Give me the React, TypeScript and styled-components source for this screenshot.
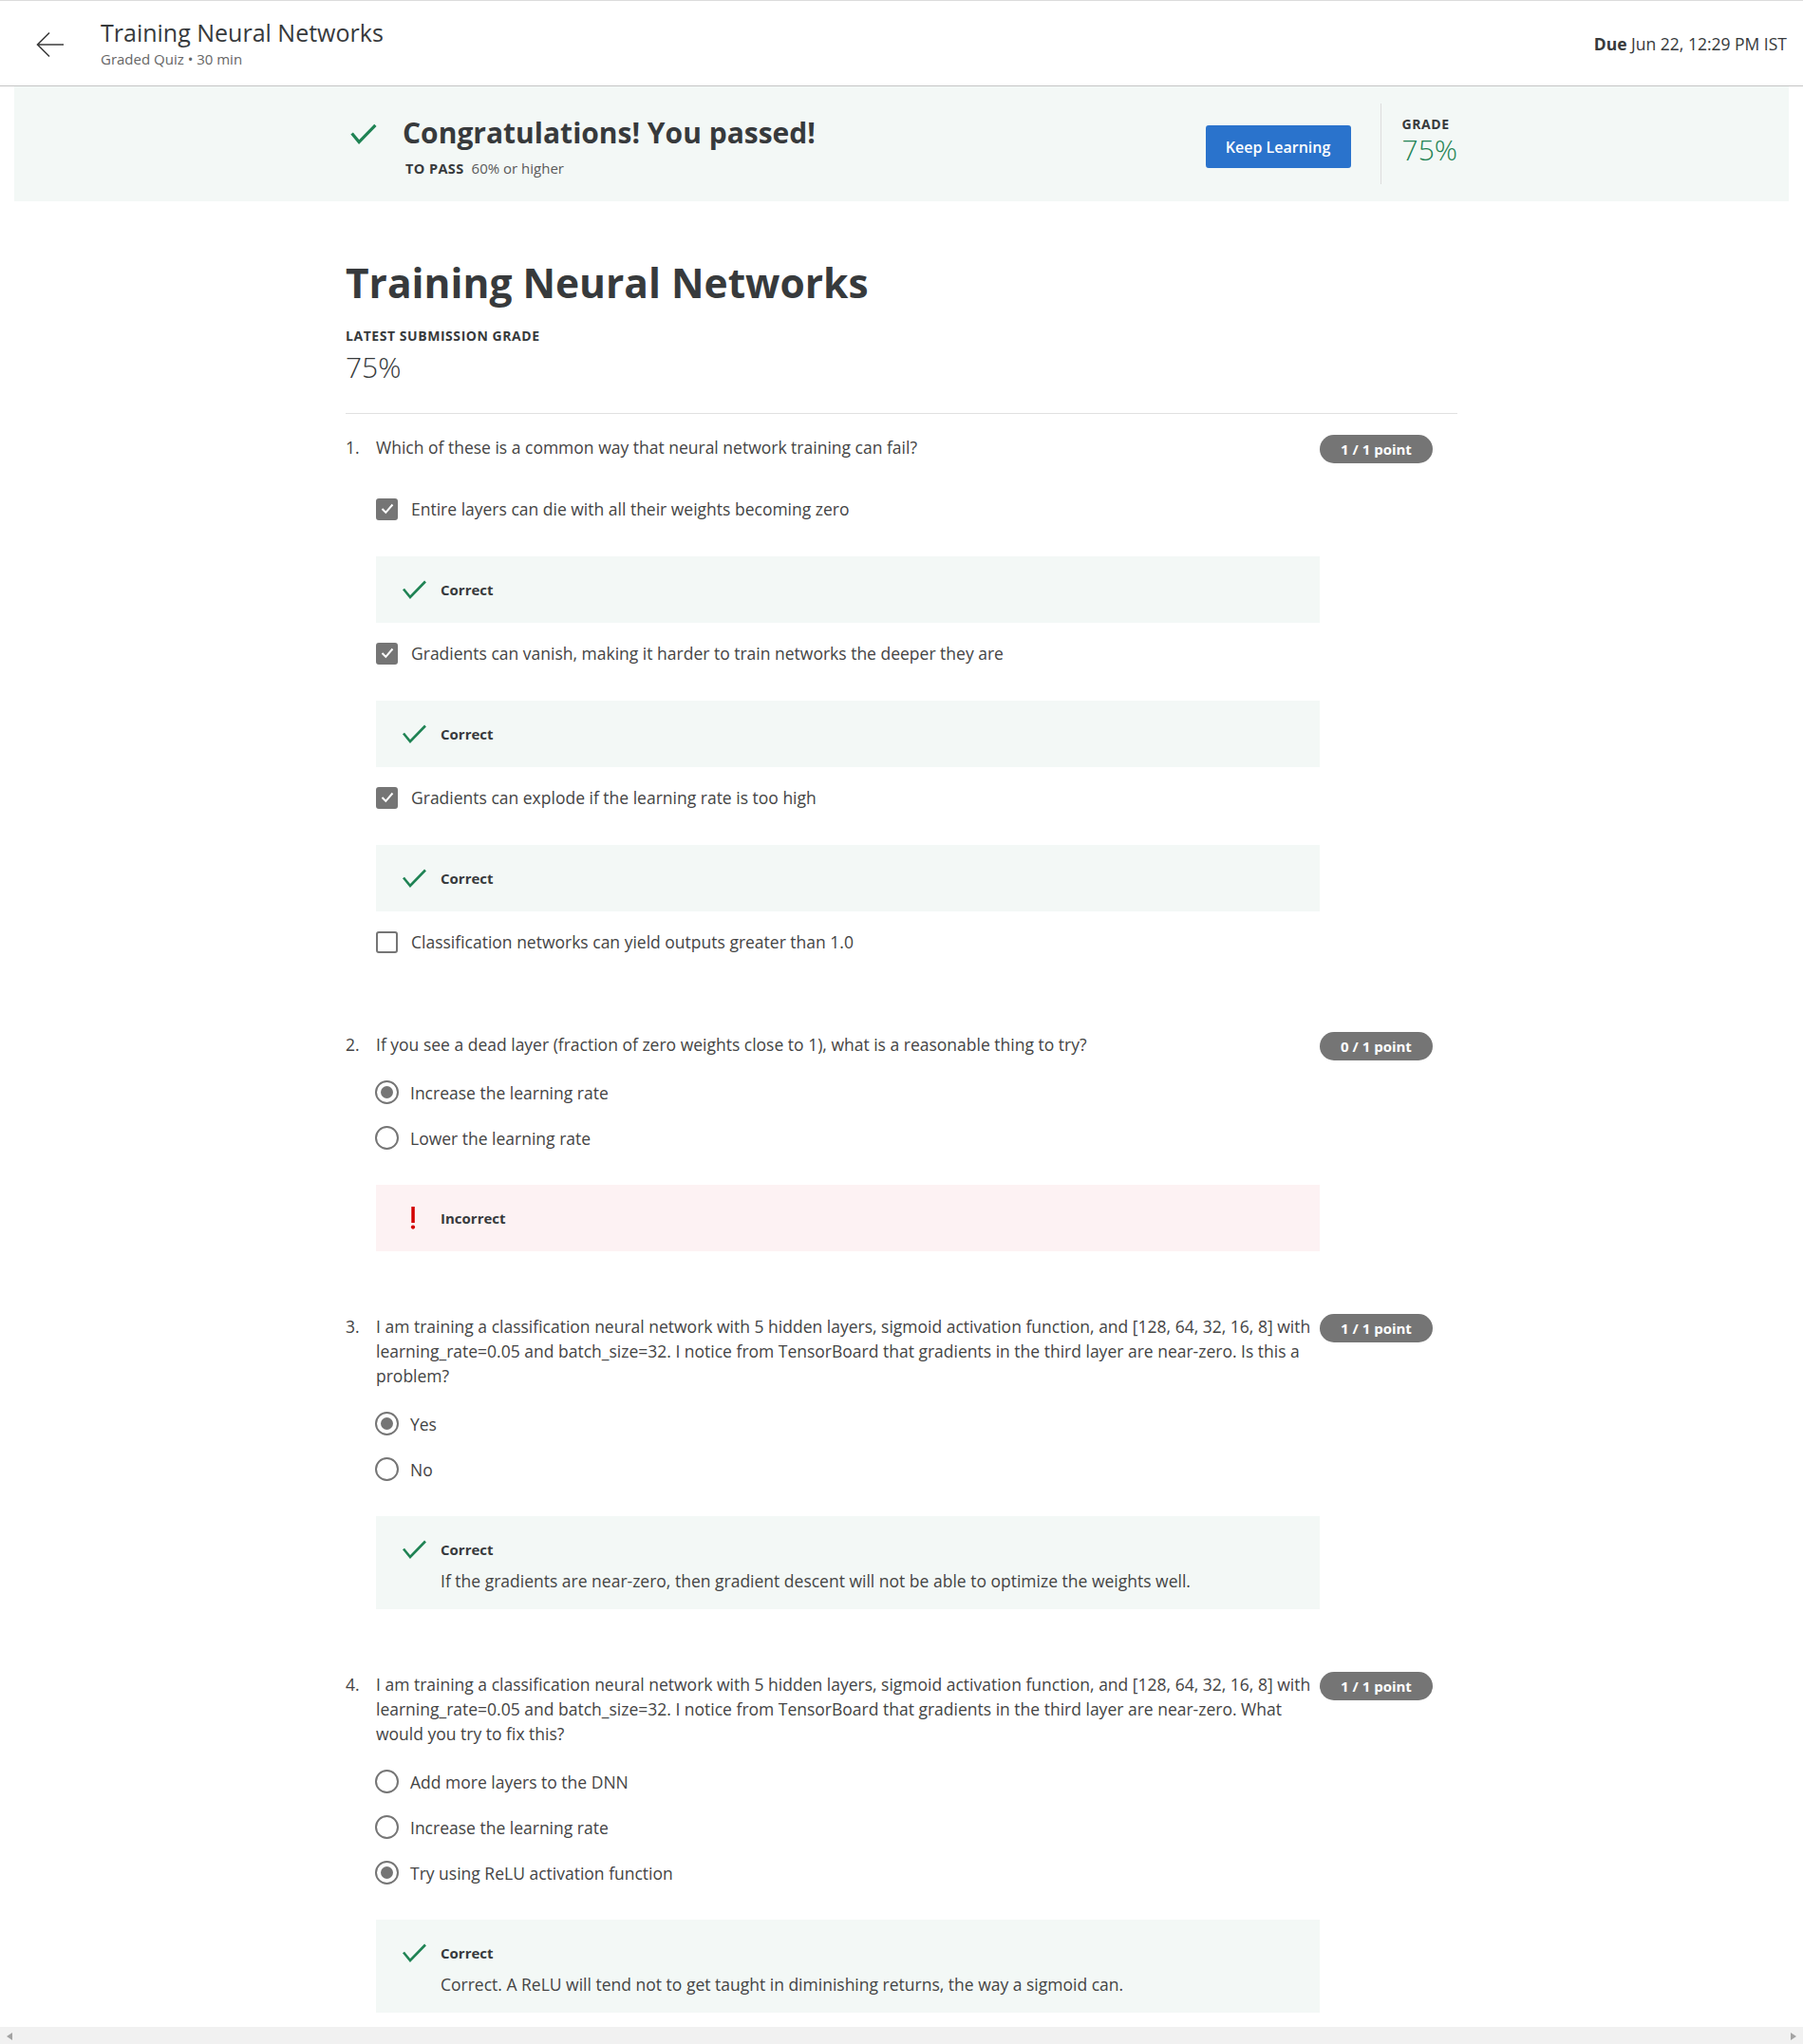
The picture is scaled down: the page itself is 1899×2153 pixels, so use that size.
import React from 'react';
import styled, { createGlobalStyle } from 'styled-components';

const GlobalStyle = createGlobalStyle`
  html, body {
    margin: 0;
    padding: 0;
    background: #ffffff;
  }
  body {
    font-family: "Open Sans", "Noto Sans", Arial, sans-serif;
    color: #373a3c;
  }
  * {
    box-sizing: border-box;
  }
`;

type Option = { text: string; selected: boolean };
type Feedback = { status: 'correct' | 'incorrect'; explanation?: string };
type Question = {
  num: number;
  text: string;
  points: string;
  kind: 'checkbox' | 'radio';
  options: (Option & { feedback?: Feedback })[];
  feedback?: Feedback;
};

const questions: Question[] = [
  {
    num: 1,
    text: 'Which of these is a common way that neural network training can fail?',
    points: '1 / 1 point',
    kind: 'checkbox',
    options: [
      { text: 'Entire layers can die with all their weights becoming zero', selected: true, feedback: { status: 'correct' } },
      { text: 'Gradients can vanish, making it harder to train networks the deeper they are', selected: true, feedback: { status: 'correct' } },
      { text: 'Gradients can explode if the learning rate is too high', selected: true, feedback: { status: 'correct' } },
      { text: 'Classification networks can yield outputs greater than 1.0', selected: false },
    ],
  },
  {
    num: 2,
    text: 'If you see a dead layer (fraction of zero weights close to 1), what is a reasonable thing to try?',
    points: '0 / 1 point',
    kind: 'radio',
    options: [
      { text: 'Increase the learning rate', selected: true },
      { text: 'Lower the learning rate', selected: false },
    ],
    feedback: { status: 'incorrect' },
  },
  {
    num: 3,
    text: 'I am training a classification neural network with 5 hidden layers, sigmoid activation function, and [128, 64, 32, 16, 8] with learning_rate=0.05 and batch_size=32. I notice from TensorBoard that gradients in the third layer are near-zero. Is this a problem?',
    points: '1 / 1 point',
    kind: 'radio',
    options: [
      { text: 'Yes', selected: true },
      { text: 'No', selected: false },
    ],
    feedback: {
      status: 'correct',
      explanation: 'If the gradients are near-zero, then gradient descent will not be able to optimize the weights well.',
    },
  },
  {
    num: 4,
    text: 'I am training a classification neural network with 5 hidden layers, sigmoid activation function, and [128, 64, 32, 16, 8] with learning_rate=0.05 and batch_size=32. I notice from TensorBoard that gradients in the third layer are near-zero. What would you try to fix this?',
    points: '1 / 1 point',
    kind: 'radio',
    options: [
      { text: 'Add more layers to the DNN', selected: false },
      { text: 'Increase the learning rate', selected: false },
      { text: 'Try using ReLU activation function', selected: true },
    ],
    feedback: {
      status: 'correct',
      explanation: 'Correct. A ReLU will tend not to get taught in diminishing returns, the way a sigmoid can.',
    },
  },
];

const Screen = styled.div`
  height: 2153px;
  display: flex;
  flex-direction: column;
  overflow: hidden;
`;

const Viewport = styled.div`
  flex: 1;
  overflow: hidden;
`;

const Header = styled.header`
  height: 91px;
  border-top: 1px solid #dcdcdc;
  border-bottom: 1px solid #c4c4c4;
  display: flex;
  align-items: center;
  padding: 0 17px 0 38px;
`;

const BackButton = styled.button`
  border: none;
  background: none;
  padding: 0;
  margin: 2px 38px 0 0;
  display: flex;
  cursor: pointer;
`;

const HeaderTitles = styled.div`
  flex: 1;
  display: flex;
  flex-direction: column;
  margin-top: -1px;
`;

const HeaderTitle = styled.div`
  font-size: 25px;
  line-height: 30px;
  color: #373a3c;
`;

const HeaderSub = styled.div`
  font-size: 15px;
  line-height: 20px;
  margin-top: 3px;
  color: #666666;
`;

const DueText = styled.div`
  font-size: 17.5px;
  line-height: 24px;
  color: #373a3c;
  b {
    font-weight: 700;
  }
`;

const Banner = styled.section`
  margin: 0 15px;
  height: 121px;
  background: #f3f8f6;
  display: flex;
  align-items: center;
`;

const BannerInner = styled.div`
  width: 1171px;
  margin: 0 auto;
  display: flex;
  align-items: center;
`;

const PassBlock = styled.div`
  flex: 1;
  display: grid;
  grid-template-columns: 60px 1fr;
  margin-top: 5px;
`;

const PassIcon = styled.div`
  padding: 8px 0 0 5px;
`;

const PassTitle = styled.h2`
  margin: 0;
  font-size: 30px;
  line-height: 38px;
  font-weight: 700;
  color: #373a3c;
`;

const PassSub = styled.div`
  grid-column: 2;
  margin-top: 8px;
  font-size: 15px;
  line-height: 20px;
  color: #5a5a5a;
  padding-left: 3px;
  b {
    font-size: 14.5px;
    font-weight: 700;
    color: #373a3c;
    letter-spacing: 0.4px;
    margin-right: 8px;
  }
`;

const PrimaryButton = styled.button`
  width: 153px;
  height: 45px;
  border: none;
  border-radius: 3px;
  background: #2a73cc;
  color: #ffffff;
  font-family: inherit;
  font-size: 16px;
  font-weight: 600;
  margin: 6px 31px 0 0;
  cursor: pointer;
`;

const VDivider = styled.div`
  width: 1px;
  height: 85px;
  background: #dddddd;
`;

const GradeBlock = styled.div`
  padding-left: 22px;
  display: flex;
  flex-direction: column;
  margin-top: -8px;
`;

const SmallCaps = styled.div`
  font-size: 14px;
  line-height: 20px;
  font-weight: 700;
  letter-spacing: 0.55px;
  text-transform: uppercase;
  color: #373a3c;
`;

const BigGrade = styled.div<{ $green?: boolean }>`
  font-size: 30px;
  line-height: 34px;
  font-weight: 300;
  color: ${p => (p.$green ? '#1f8354' : '#373a3c')};
`;

const Main = styled.main`
  width: 1171px;
  margin: 0 auto;
  padding-top: 58px;
`;

const PageTitle = styled.h1`
  margin: 0;
  font-size: 42.5px;
  line-height: 56px;
  font-weight: 700;
  color: #373a3c;
`;

const SubmissionBlock = styled.div`
  margin-top: 18px;
  display: flex;
  flex-direction: column;
  gap: 6px;
  padding-bottom: 31px;
  border-bottom: 1px solid #e1e1e1;
`;

const QuestionList = styled.div`
  padding-top: 22px;
  display: flex;
  flex-direction: column;
  gap: 66px;
`;

const QuestionRow = styled.div`
  display: grid;
  grid-template-columns: 32px 994px 1fr;
`;

const QNum = styled.div`
  font-size: 17.5px;
  line-height: 26px;
  color: #444444;
`;

const QBody = styled.div`
  display: flex;
  flex-direction: column;
`;

const QText = styled.div`
  font-size: 17.5px;
  line-height: 26px;
  color: #444444;
`;

const PointsBadge = styled.div`
  justify-self: start;
  width: 119px;
  height: 30px;
  border-radius: 15px;
  background: #757575;
  color: #ffffff;
  font-size: 15px;
  font-weight: 700;
  display: flex;
  align-items: center;
  justify-content: center;
`;

const OptionRow = styled.div<{ $top: number }>`
  display: flex;
  align-items: center;
  min-height: 24px;
  margin-top: ${p => p.$top}px;
  font-size: 17.5px;
  line-height: 24px;
  color: #444444;
`;

const CheckBox = styled.span<{ $checked: boolean }>`
  width: 23px;
  height: 23px;
  flex-shrink: 0;
  border-radius: 3px;
  border: 2px solid #757575;
  background: ${p => (p.$checked ? '#757575' : '#ffffff')};
  display: flex;
  align-items: center;
  justify-content: center;
  margin-right: 14px;
`;

const Radio = styled.span<{ $checked: boolean }>`
  width: 25px;
  height: 25px;
  flex-shrink: 0;
  border-radius: 50%;
  border: 2px solid #757575;
  margin: 0 12px 0 -1px;
  display: flex;
  align-items: center;
  justify-content: center;
  &::after {
    content: '';
    width: 13px;
    height: 13px;
    border-radius: 50%;
    background: ${p => (p.$checked ? '#757575' : 'transparent')};
  }
`;

const FeedbackBox = styled.div<{ $status: 'correct' | 'incorrect'; $top: number }>`
  margin-top: ${p => p.$top}px;
  background: ${p => (p.$status === 'correct' ? '#f3f8f6' : '#fdf2f3')};
  padding: 24px 24px 24px 27px;
  display: grid;
  grid-template-columns: 41px 1fr;
`;

const FeedbackIcon = styled.div`
  display: flex;
  align-items: center;
  height: 22px;
`;

const FeedbackLabel = styled.div`
  font-size: 15px;
  line-height: 22px;
  font-weight: 700;
  color: #373a3c;
`;

const Explanation = styled.div`
  grid-column: 2;
  margin: 10px 0 -6px;
  font-size: 17.5px;
  line-height: 24px;
  color: #444444;
`;

const ScrollBar = styled.div`
  height: 18px;
  flex-shrink: 0;
  background: #f1f1f1;
  display: flex;
  align-items: center;
  justify-content: space-between;
  padding: 1px 7px 0 7px;
`;

const Arrow = styled.span<{ $dir: 'left' | 'right' }>`
  width: 0;
  height: 0;
  border-top: 4.5px solid transparent;
  border-bottom: 4.5px solid transparent;
  ${p =>
    p.$dir === 'left'
      ? 'border-right: 6px solid #a3a3a3;'
      : 'border-left: 6px solid #a3a3a3;'}
`;

const BackArrow = () => (
  <svg width="30" height="28" viewBox="0 0 30 28" fill="none">
    <path d="M29 14H1.5M14 1.5L1.5 14L14 26.5" stroke="#3c3c3c" strokeWidth="1.6" />
  </svg>
);

const GreenCheck = ({ w, h, sw }: { w: number; h: number; sw: number }) => (
  <svg width={w} height={h} viewBox="0 0 26 20" fill="none">
    <path d="M1.5 9.5L8.5 18L24.5 1.5" stroke="#1f8354" strokeWidth={sw} />
  </svg>
);

const WhiteTick = () => (
  <svg width="14" height="12" viewBox="0 0 14 12" fill="none">
    <path d="M1.5 6L5.3 9.8L12.5 1.5" stroke="#ffffff" strokeWidth="2" />
  </svg>
);

const RedBang = () => (
  <svg width="27" height="24" viewBox="0 0 27 24" fill="none">
    <rect x="10.3" y="0" width="3.5" height="17" fill="#d30001" />
    <circle cx="12" cy="21.6" r="2.1" fill="#d30001" />
  </svg>
);

const FeedbackPanel = ({ fb, top }: { fb: Feedback; top: number }) => (
  <FeedbackBox $status={fb.status} $top={top}>
    <FeedbackIcon>{fb.status === 'correct' ? <GreenCheck w={27} h={20} sw={2.6} /> : <RedBang />}</FeedbackIcon>
    <FeedbackLabel>{fb.status === 'correct' ? 'Correct' : 'Incorrect'}</FeedbackLabel>
    {fb.explanation && <Explanation>{fb.explanation}</Explanation>}
  </FeedbackBox>
);

const QuestionItem = ({ q }: { q: Question }) => {
  const isCheck = q.kind === 'checkbox';
  return (
    <QuestionRow>
      <QNum>{q.num}.</QNum>
      <QBody>
        <QText>{q.text}</QText>
        {q.options.map((opt, i) => {
          let top = isCheck ? 40 : 23;
          if (i === 0 && !isCheck) top = 25;
          if (isCheck && i > 0 && q.options[i - 1].feedback) top = 20;
          return (
            <React.Fragment key={opt.text}>
              <OptionRow $top={top}>
                {isCheck ? (
                  <CheckBox $checked={opt.selected}>{opt.selected && <WhiteTick />}</CheckBox>
                ) : (
                  <Radio $checked={opt.selected} />
                )}
                {opt.text}
              </OptionRow>
              {opt.feedback && <FeedbackPanel fb={opt.feedback} top={38} />}
            </React.Fragment>
          );
        })}
        {isCheck && <div style={{ height: 17 }} />}
        {q.feedback && <FeedbackPanel fb={q.feedback} top={37} />}
      </QBody>
      <PointsBadge>{q.points}</PointsBadge>
    </QuestionRow>
  );
};

export default function App() {
  return (
    <>
      <GlobalStyle />
      <Screen>
        <Viewport>
          <Header>
            <BackButton aria-label="Back">
              <BackArrow />
            </BackButton>
            <HeaderTitles>
              <HeaderTitle>Training Neural Networks</HeaderTitle>
              <HeaderSub>Graded Quiz • 30 min</HeaderSub>
            </HeaderTitles>
            <DueText>
              <b>Due</b> Jun 22, 12:29 PM IST
            </DueText>
          </Header>

          <Banner>
            <BannerInner>
              <PassBlock>
                <PassIcon>
                  <GreenCheck w={28} h={24} sw={3} />
                </PassIcon>
                <PassTitle>Congratulations! You passed!</PassTitle>
                <PassSub>
                  <b>TO PASS</b>60% or higher
                </PassSub>
              </PassBlock>
              <PrimaryButton>Keep Learning</PrimaryButton>
              <VDivider />
              <GradeBlock>
                <SmallCaps>Grade</SmallCaps>
                <BigGrade $green>75%</BigGrade>
              </GradeBlock>
            </BannerInner>
          </Banner>

          <Main>
            <PageTitle>Training Neural Networks</PageTitle>
            <SubmissionBlock>
              <SmallCaps>Latest Submission Grade</SmallCaps>
              <BigGrade>75%</BigGrade>
            </SubmissionBlock>
            <QuestionList>
              {questions.map(q => (
                <QuestionItem key={q.num} q={q} />
              ))}
            </QuestionList>
          </Main>
        </Viewport>
        <ScrollBar>
          <Arrow $dir="left" />
          <Arrow $dir="right" />
        </ScrollBar>
      </Screen>
    </>
  );
}
